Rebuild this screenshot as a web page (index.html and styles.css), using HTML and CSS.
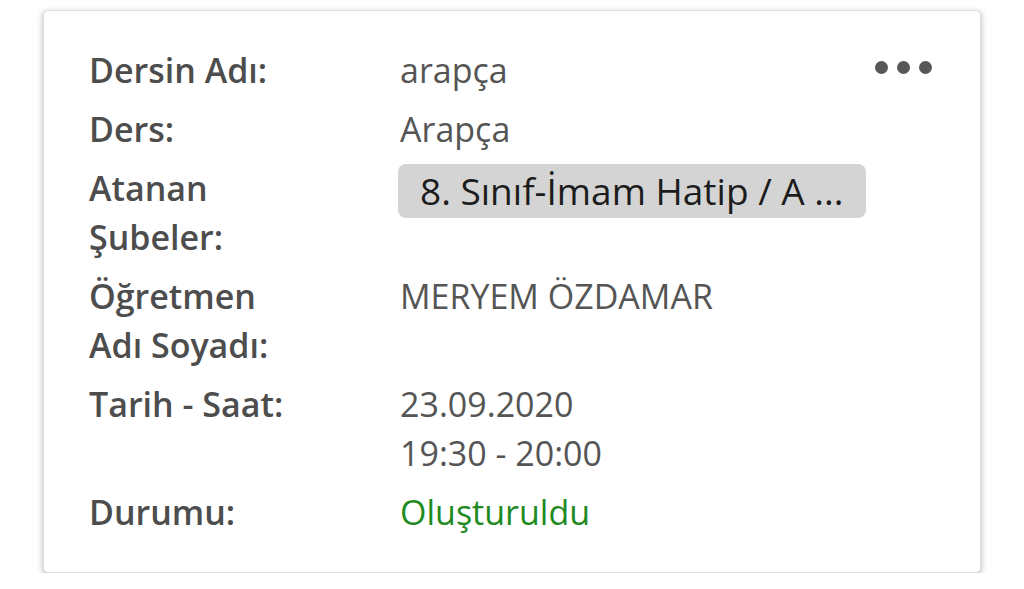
FILE: index.html
```html
<!DOCTYPE html>
<html lang="tr">
<head>
<meta charset="utf-8">
<link rel="stylesheet" href="styles.css">
</head>
<body>
<div class="card">
  <div class="menu" aria-label="menu"><span></span><span></span><span></span></div>
  <div class="details">
    <div class="label">Dersin Adı:</div>
    <div class="value">arapça</div>
    <div class="label">Ders:</div>
    <div class="value">Arapça</div>
    <div class="label">Atanan Şubeler:</div>
    <div class="value"><span class="chip">8. Sınıf-İmam Hatip / A ...</span></div>
    <div class="label">Öğretmen Adı Soyadı:</div>
    <div class="value">MERYEM ÖZDAMAR</div>
    <div class="label">Tarih - Saat:</div>
    <div class="value">23.09.2020<br>19:30 - 20:00</div>
    <div class="label">Durumu:</div>
    <div class="value status">Oluşturuldu</div>
  </div>
</div>
</body>
</html>
```

FILE: styles.css
```css
html, body {
  margin: 0;
  padding: 0;
  background: #ffffff;
}
body {
  font-family: "Open Sans", "Noto Sans", sans-serif;
  padding: 10px 0 0 43px;
}
.card {
  position: relative;
  box-sizing: border-box;
  width: 938px;
  height: 563px;
  background: #fff;
  border: 1px solid #dedede;
  border-radius: 5px;
  box-shadow: 0 2px 6px rgba(0,0,0,0.3);
  padding: 35px 46px 0 45px;
}
.menu {
  position: absolute;
  top: 50px;
  right: 48px;
  display: flex;
  gap: 9px;
}
.menu span {
  width: 13px;
  height: 13px;
  border-radius: 50%;
  background: #585858;
}
.details {
  display: grid;
  grid-template-columns: 210px 1fr;
  column-gap: 101px;
  row-gap: 10px;
  font-size: 34px;
  line-height: 49px;
}
.label {
  font-weight: 600;
  color: #4d4d4d;
}
.value {
  color: #555;
}
.chip {
  display: inline-block;
  background: #d4d4d4;
  color: #1c1c1c;
  border-radius: 8px;
  padding: 0 23px 0 22px;
  height: 54px;
  line-height: 54px;
  margin-left: -2px;
  font-size: 37px;
  white-space: nowrap;
}
.status {
  color: #1f8a1f;
}
```
